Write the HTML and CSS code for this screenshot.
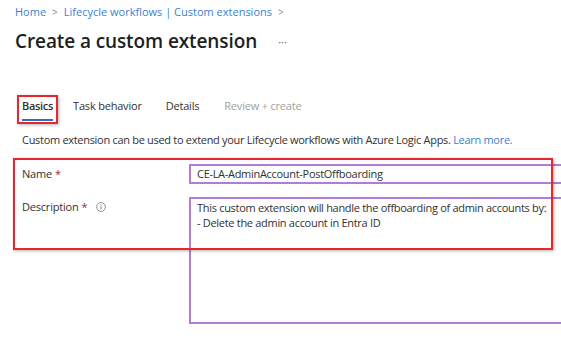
FILE: index.html
```html
<!DOCTYPE html>
<html lang="en">
<head>
<meta charset="utf-8">
<title>Create a custom extension</title>
<link rel="stylesheet" href="styles.css">
</head>
<body>
<div class="page">
  <nav class="breadcrumb">
    <a class="crumb" href="#">Home</a>
    <span class="sep">&gt;</span>
    <a class="crumb" href="#">Lifecycle workflows | Custom extensions</a>
    <span class="sep">&gt;</span>
  </nav>
  <div class="title-row">
    <h1 class="title">Create a custom extension</h1>
    <span class="more">&middot;&middot;&middot;</span>
  </div>
  <div class="content">
    <div class="tabs">
      <div class="tab tab-active">Basics<span class="annot annot-tab"></span></div>
      <div class="tab">Task behavior</div>
      <div class="tab">Details</div>
      <div class="tab tab-disabled">Review + create</div>
    </div>
    <p class="intro">Custom extension can be used to extend your Lifecycle workflows with Azure Logic Apps. <a class="link" href="#">Learn more.</a></p>
    <div class="form">
      <span class="annot annot-form"></span>
      <div class="row">
        <label class="label">Name <span class="req">*</span></label>
        <div class="input">CE-LA-AdminAccount-PostOffboarding</div>
      </div>
      <div class="row">
        <label class="label">Description <span class="req">*</span>
          <svg class="info" width="10" height="10" viewBox="0 0 10 10"><circle cx="5" cy="5" r="4.4" fill="none" stroke="#8a8886" stroke-width="0.9"/><rect x="4.5" y="4.2" width="1" height="3.2" fill="#8a8886"/><circle cx="5" cy="2.9" r="0.6" fill="#8a8886"/></svg>
        </label>
        <div class="textarea">This custom extension will handle the offboarding of admin accounts by:<br>- Delete the admin account in Entra ID</div>
      </div>
    </div>
  </div>
</div>
</body>
</html>
```
FILE: styles.css
```css
html, body {
  margin: 0;
  padding: 0;
  background: #ffffff;
  overflow: hidden;
}
body {
  font-family: "Open Sans", "Noto Sans", sans-serif;
  color: #323130;
  width: 561px;
  height: 339px;
}
.page {
  padding: 4px 0 0 15px;
}
.breadcrumb {
  display: flex;
  align-items: center;
  gap: 6px;
  font-size: 11px;
  line-height: 16px;
  height: 16px;
}
.crumb {
  color: #3a7fd3;
  text-decoration: none;
}
.sep {
  color: #8a8886;
  font-size: 10px;
}
.title-row {
  display: flex;
  align-items: center;
  margin-top: 7px;
  height: 28px;
}
.title {
  margin: 0;
  font-size: 19px;
  font-weight: 600;
  line-height: 28px;
  color: #201f1e;
  letter-spacing: -0.1px;
}
.more {
  margin-left: 21px;
  color: #605e5c;
  font-size: 11px;
}
.content {
  padding-left: 7px;
}
.tabs {
  display: flex;
  gap: 20px;
  margin-top: 43px;
  font-size: 11px;
  line-height: 16px;
  letter-spacing: -0.2px;
}
.tab {
  position: relative;
  padding-bottom: 5px;
  border-bottom: 2px solid transparent;
  color: #323130;
}
.tab-active {
  font-weight: 600;
  letter-spacing: -0.3px;
  border-bottom-color: #2f6fc7;
}
.tab:nth-child(3) {
  margin-left: 4px;
}
.tab:nth-child(4) {
  margin-left: 5px;
}
.tab-disabled {
  color: #a19f9d;
}
.annot {
  position: absolute;
  border: 2px solid #e8262b;
  box-shadow: 1px 1px 3px rgba(0, 0, 0, 0.3);
  pointer-events: none;
}
.annot-tab {
  left: -5px;
  right: -5px;
  top: -3px;
  bottom: -5px;
}
.intro {
  margin: 11px 0 0 0;
  font-size: 11px;
  line-height: 16px;
  letter-spacing: -0.3px;
}
.link {
  color: #3a7fd3;
  text-decoration: none;
}
.form {
  position: relative;
  margin-top: 16px;
  display: flex;
  flex-direction: column;
  gap: 13px;
}
.annot-form {
  left: -9px;
  top: -6px;
  width: 536px;
  height: 88px;
}
.row {
  display: flex;
  align-items: flex-start;
}
.label {
  width: 167px;
  flex: none;
  font-size: 11px;
  line-height: 20px;
  letter-spacing: -0.2px;
  display: flex;
  align-items: center;
  gap: 3px;
}
.req {
  color: #a4262c;
}
.info {
  margin-left: 6px;
}
.input, .textarea {
  flex: none;
  width: 400px;
  box-sizing: border-box;
  border: 2px solid #b47cd0;
  font-size: 11px;
  letter-spacing: -0.3px;
  color: #323130;
  padding: 0 6px;
  white-space: nowrap;
}
.input {
  height: 20px;
  line-height: 16px;
}
.textarea {
  height: 127px;
  line-height: 15px;
  padding-top: 1px;
}
```
